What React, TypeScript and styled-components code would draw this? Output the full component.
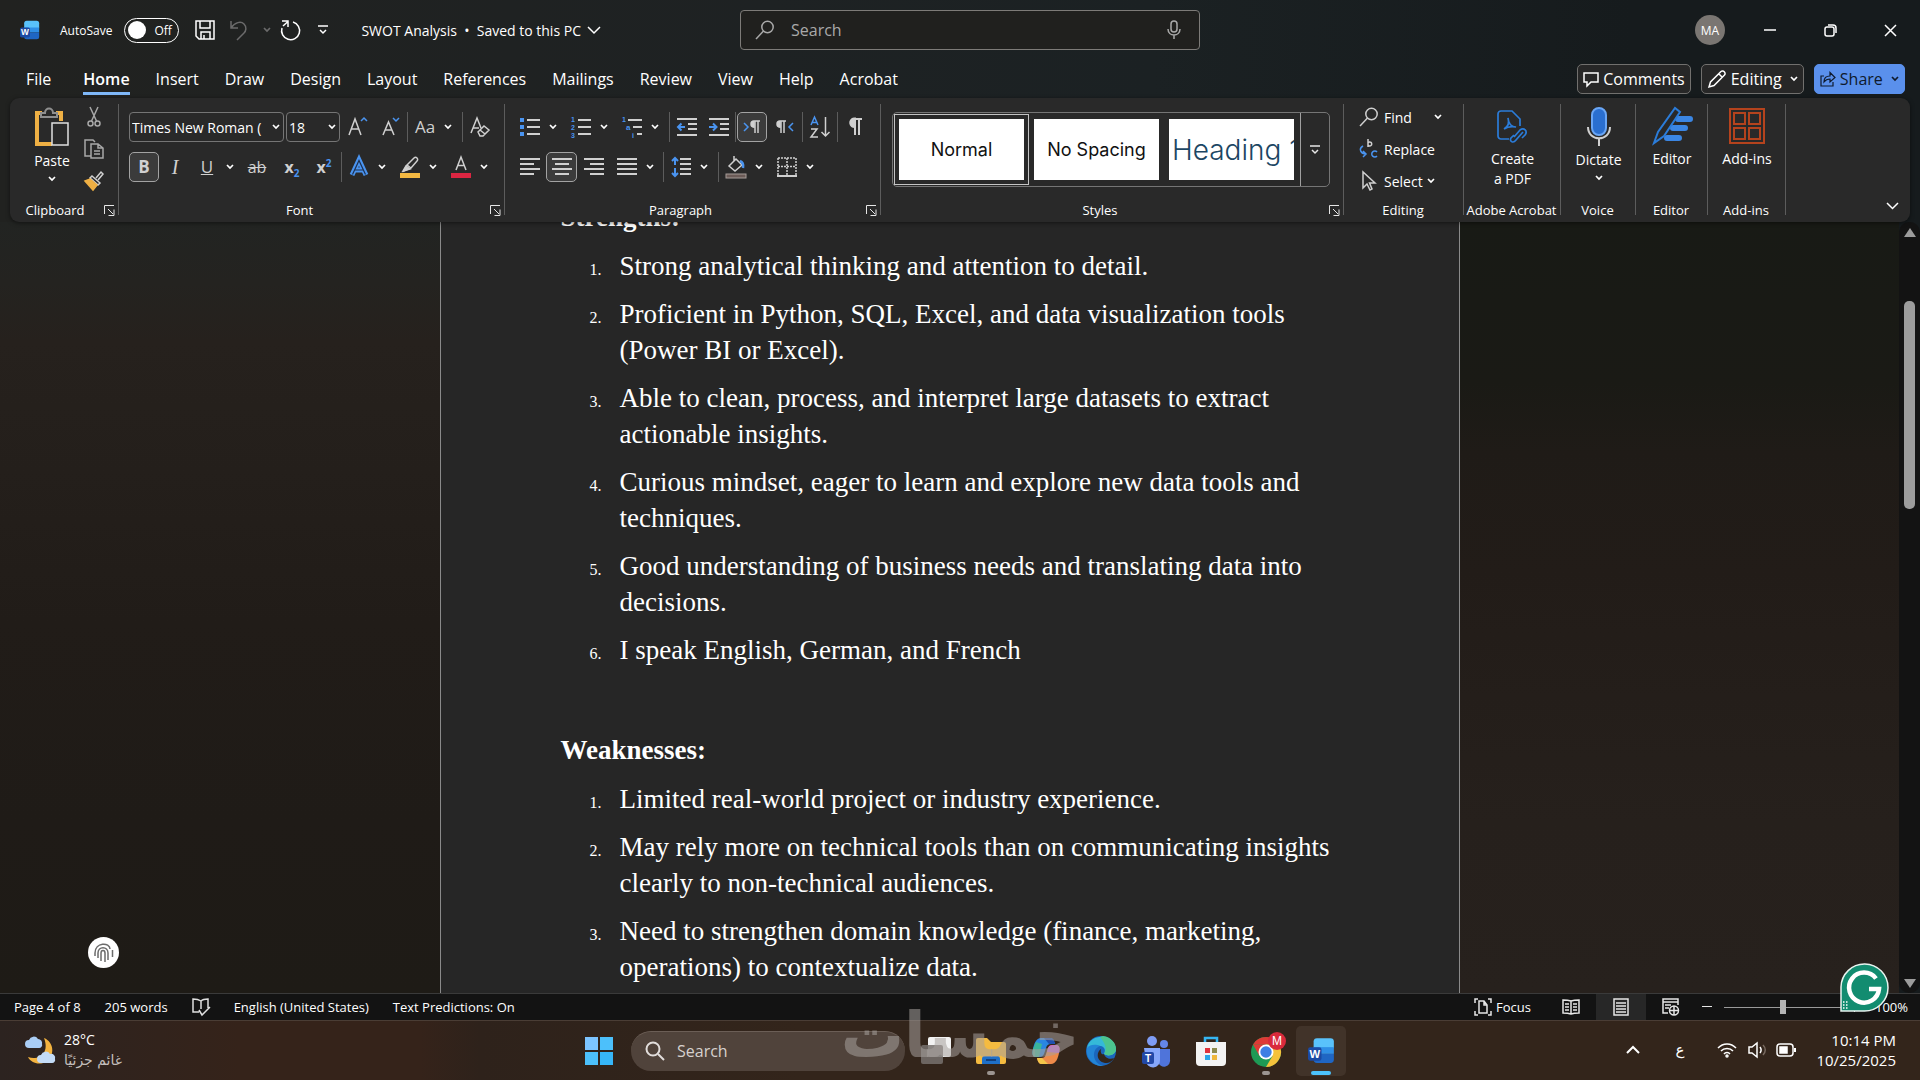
import React from "react";
import styled, { createGlobalStyle } from "styled-components";

const ui = `"Open Sans", "Noto Sans", "DejaVu Sans", sans-serif`;
const blue = "#4a94f0";
const ink = "#d0d0d0";

const Global = createGlobalStyle`
  *, *::before, *::after { box-sizing: border-box; }
  html, body { margin: 0; padding: 0; }
  body { background: #1c1b17; color: #fff; font-family: ${ui}; overflow: hidden; }
  button, input, select { font: inherit; color: inherit; }
  button { background: none; border: 0; padding: 0; margin: 0; }
  h2, p, ol { margin: 0; padding: 0; font: inherit; }
  svg { display: block; flex: none; overflow: visible; }
`;

const Shell = styled.div`
  position: relative;
  height: 100vh;
  display: flex;
  flex-direction: column;
  background: linear-gradient(90deg, #212220 0, #1e2223 40%, #1b2123 60%, #161b1d 85%, #161b1d);
`;

/* ---------- title bar ---------- */
const TitleBar = styled.header`
  display: grid;
  grid-template-columns: minmax(0, 1fr) 460px minmax(0, 1fr);
  align-items: center;
  height: 60px;
  padding-left: 20px;
`;
const TitleLeft = styled.div`
  display: flex;
  align-items: center;
  white-space: nowrap;
`;
const AutoSave = styled.label`
  display: flex;
  align-items: center;
  gap: 12px;
  margin: 0 16px 0 20px;
  font-size: 12px;
`;
const Toggle = styled.span`
  display: flex;
  align-items: center;
  gap: 8px;
  width: 55px;
  height: 25px;
  padding-left: 3px;
  border: 1px solid #fff;
  border-radius: 13px;
  &::before { content: ""; width: 18px; height: 18px; border-radius: 50%; background: #fff; }
`;
const HiddenCheck = styled.input`
  position: absolute;
  opacity: 0;
  width: 1px;
  height: 1px;
`;
const QuickButton = styled.button<{ $w: number }>`
  display: flex;
  align-items: center;
  justify-content: center;
  width: ${(p) => p.$w}px;
  height: 30px;
`;
const DocTitle = styled.button`
  display: flex;
  align-items: center;
  gap: 6px;
  margin-left: 24px;
  font-size: 14px;
`;
const SearchBox = styled.label`
  display: flex;
  align-items: center;
  gap: 16px;
  height: 40px;
  padding: 0 18px 0 14px;
  border: 1px solid #7d7b78;
  border-radius: 4px;
  background: #20201e;
`;
const SearchInput = styled.input`
  flex: 1;
  min-width: 0;
  border: 0;
  outline: 0;
  padding: 0;
  background: none;
  font-size: 16px;
  &::placeholder { color: #a9a9a9; opacity: 1; }
`;
const WindowButtons = styled.div`
  display: flex;
  justify-content: flex-end;
  align-items: center;
`;
const Avatar = styled.button`
  width: 30px;
  height: 30px;
  margin-right: 15px;
  border-radius: 50%;
  background: #7a7672;
  font-size: 12px;
`;

/* ---------- tabs ---------- */
const TabRow = styled.nav`
  display: flex;
  align-items: center;
  justify-content: space-between;
  height: 38px;
  padding: 0 15px 0 26px;
`;
const Tabs = styled.div`
  display: flex;
  gap: 26px;
`;
const Tab = styled.button<{ $active?: boolean; $first?: boolean }>`
  height: 32px;
  margin-right: ${(p) => (p.$first ? 6 : 0)}px;
  padding-top: 3px;
  border-bottom: 3px solid ${(p) => (p.$active ? "#7fb8f8" : "transparent")};
  font-size: 16px;
  line-height: 26px;
  font-weight: ${(p) => (p.$active ? 600 : 400)};
`;
const Actions = styled.div`
  display: flex;
  gap: 10px;
`;
const ActionButton = styled.button<{ $primary?: boolean }>`
  display: flex;
  align-items: center;
  gap: 4px;
  height: 30px;
  padding: 0 5px;
  border: 1px solid ${(p) => (p.$primary ? "#5a90ec" : "#71706e")};
  border-radius: 5px;
  background: ${(p) => (p.$primary ? "#5a90ec" : "#272727")};
  color: ${(p) => (p.$primary ? "#0f1a2c" : "#fff")};
  font-size: 16px;
`;

/* ---------- ribbon ---------- */
const Ribbon = styled.section`
  position: relative;
  z-index: 1;
  display: flex;
  height: 124px;
  margin: 0 10px;
  border-radius: 9px;
  background: #292929;
  box-shadow: 0 1px 4px rgba(0, 0, 0, 0.5);
`;
const GroupBox = styled.div<{ $w: number; $pad: number; $top: number }>`
  position: relative;
  display: flex;
  flex-direction: column;
  justify-content: space-between;
  flex: none;
  width: ${(p) => p.$w}px;
  padding: ${(p) => p.$top}px 0 2px ${(p) => p.$pad}px;
  &::after {
    content: "";
    position: absolute;
    right: 0;
    top: 6px;
    bottom: 7px;
    width: 1px;
    background: #5c5c5c;
  }
`;
const GroupFoot = styled.div<{ $pad: number; $end: number }>`
  display: flex;
  align-items: center;
  gap: ${(p) => p.$end}px;
  height: 20px;
  margin-left: -${(p) => p.$pad}px;
  padding-right: ${(p) => (p.$end ? 4 : 2)}px;
  font-size: 13px;
  line-height: 20px;
  white-space: nowrap;
`;
const FootLabel = styled.span`
  flex: 1;
  text-align: center;
`;
const Rows = styled.div`
  display: flex;
  flex-direction: column;
  gap: 10px;
`;
const Row = styled.div<{ $gap?: number }>`
  display: flex;
  align-items: center;
  gap: ${(p) => p.$gap ?? 0}px;
`;
const Tool = styled.button<{ $w?: number; $on?: boolean }>`
  display: flex;
  align-items: center;
  justify-content: center;
  flex: none;
  width: ${(p) => p.$w ?? 32}px;
  height: 30px;
  border: 1px solid ${(p) => (p.$on ? "#a3a3a3" : "transparent")};
  border-radius: 5px;
  background: ${(p) => (p.$on ? "#3b3b3b" : "none")};
`;
const Split = styled.button`
  display: grid;
  grid-template-columns: 32px 14px;
  align-items: center;
  justify-items: center;
  height: 30px;
`;
const Sep = styled.i<{ $l?: number; $r?: number }>`
  flex: none;
  width: 1px;
  height: 30px;
  margin: 0 ${(p) => p.$r ?? 1}px 0 ${(p) => p.$l ?? 0}px;
  background: #5c5c5c;
`;
const Combo = styled.label<{ $w: number }>`
  display: flex;
  align-items: center;
  width: ${(p) => p.$w}px;
  height: 30px;
  margin-right: 2px;
  padding-right: 3px;
  border: 1px solid #757575;
  border-radius: 4px;
`;
const Select = styled.select`
  appearance: none;
  flex: 1;
  min-width: 0;
  padding: 0 0 0 2px;
  border: 0;
  outline: 0;
  background: none;
  font-size: 14px;
`;
const ClipGrid = styled.div`
  display: flex;
`;
const ClipColumn = styled.div`
  display: flex;
  flex-direction: column;
  align-items: center;
  gap: 12px;
  width: 24px;
`;
const BigButton = styled.button<{ $w: number; $gap?: number }>`
  display: flex;
  flex-direction: column;
  align-items: center;
  width: ${(p) => p.$w}px;
  font-size: 14px;
  line-height: 20px;
  & > svg:first-child { margin-bottom: ${(p) => p.$gap ?? 4}px; }
  & > svg + svg { margin-top: 5px; }
`;
const Gallery = styled.div`
  display: flex;
  width: 438px;
  height: 75px;
  border: 1px solid #757575;
  border-radius: 5px;
`;
const StyleCards = styled.div`
  display: flex;
  gap: 10px;
  flex: 1;
  padding: 6px;
`;
const StyleCard = styled.button<{ $on?: boolean; $size: number; $color: string }>`
  width: 125px;
  height: 61px;
  padding: 0 3px;
  overflow: hidden;
  white-space: nowrap;
  background: #fff;
  color: ${(p) => p.$color};
  font-family: Inter, "Liberation Sans", sans-serif;
  font-size: ${(p) => p.$size}px;
  font-weight: ${(p) => (p.$size > 20 ? 300 : 400)};
  text-align: ${(p) => (p.$size > 20 ? "left" : "center")};
  box-shadow: ${(p) => (p.$on ? "0 0 0 4px #292929, 0 0 0 5px #c4c4c4" : "none")};
`;
const GalleryMore = styled.button`
  display: flex;
  align-items: center;
  justify-content: center;
  width: 29px;
  border: 1px solid #a0a0a0;
  border-width: 0 0 0 1px;
`;
const EditList = styled.div`
  display: flex;
  flex-direction: column;
`;
const EditItem = styled.button<{ $gap?: number }>`
  display: flex;
  align-items: center;
  height: 32px;
  font-size: 14px;
  & > svg:first-child { margin-right: 5px; }
  & > svg:last-child { margin-left: ${(p) => p.$gap ?? 0}px; }
  & > svg:only-child { margin-left: 0; }
`;
const RibbonEnd = styled.div`
  flex: 1;
  display: flex;
  justify-content: flex-end;
  align-items: flex-end;
  padding: 0 11px 12px 0;
`;

/* ---------- document ---------- */
const Workspace = styled.main`
  position: relative;
  flex: 1;
  min-height: 0;
  display: flex;
  overflow: hidden;
`;
const Canvas = styled.div`
  flex: 1;
  display: flex;
  justify-content: center;
  overflow: hidden;
  background:
    linear-gradient(180deg, #222422 0, #242320 60px, #26211d 120px, #241f1b 250px, #211c18 400px, #1f1b17 600px, #1e1b16) left / 50% 100% no-repeat,
    linear-gradient(180deg, #181a15 0, #1a1a15 160px, #1f1b17 230px, #221c18 350px, #26201c 600px, #27211d) right / 50% 100% no-repeat;
`;
const Page = styled.article`
  width: 1020px;
  max-width: 100%;
  padding: 0 120px;
  border: solid #8a8a8a;
  border-width: 0 1px;
  background: #262626;
  font-family: "Liberation Serif", "Times New Roman", serif;
  font-size: 27px;
  line-height: 36px;
`;
const Scrolled = styled.div`
  margin-top: -23px;
`;
const Heading = styled.h2`
  margin-bottom: 13px;
  font-weight: 700;
`;
const Blank = styled.p`
  height: 36px;
  margin: 14px 0;
`;
const List = styled.ol`
  display: flex;
  flex-direction: column;
  gap: 12px;
  list-style: none;
`;
const Item = styled.li`
  display: flex;
  align-items: baseline;
  padding-left: 29px;
`;
const Num = styled.span`
  flex: none;
  width: 30px;
  font-size: 16px;
  line-height: 20px;
`;
const ScrollBar = styled.div`
  display: flex;
  flex-direction: column;
  align-items: center;
  width: 21px;
  padding: 6px 0 5px;
  border-radius: 10px;
  background: #131313;
`;
const Thumb = styled.div`
  width: 11px;
  height: 208px;
  margin: 64px 0 auto;
  border-radius: 5px;
  background: #9c9c9c;
`;
const Finger = styled.button`
  position: absolute;
  left: 88px;
  bottom: 25px;
  display: flex;
  align-items: center;
  justify-content: center;
  width: 31px;
  height: 31px;
  border-radius: 50%;
  background: #fff;
`;
const Grammarly = styled.button`
  position: absolute;
  right: 31px;
  bottom: 68px;
`;

/* ---------- status bar ---------- */
const StatusBar = styled.footer`
  display: flex;
  justify-content: space-between;
  align-items: center;
  height: 28px;
  padding: 0 12px 0 14px;
  border-top: 1px solid #3a3a3a;
  border-bottom: 1px solid #4a3d35;
  background: #131313;
  font-size: 13px;
  line-height: 20px;
`;
const StatusSet = styled.div<{ $gap: number }>`
  display: flex;
  align-items: center;
  gap: ${(p) => p.$gap}px;
  height: 100%;
`;
const StatusButton = styled.button<{ $on?: boolean; $w?: number; $end?: boolean; $after?: number }>`
  display: flex;
  align-items: center;
  justify-content: ${(p) => (p.$end ? "flex-end" : "center")};
  gap: 4px;
  height: 100%;
  width: ${(p) => (p.$w ? `${p.$w}px` : "auto")};
  margin-right: ${(p) => p.$after ?? 0}px;
  background: ${(p) => (p.$on ? "#272727" : "none")};
`;
const Zoom = styled.input`
  appearance: none;
  width: 118px;
  height: 14px;
  margin: 0 6px;
  background: linear-gradient(#9a9a9a, #9a9a9a) center / 100% 1px no-repeat;
  &::-webkit-slider-thumb {
    appearance: none;
    width: 6px;
    height: 14px;
    background: #b4b4b4;
  }
`;

/* ---------- taskbar ---------- */
const TaskBar = styled.footer`
  position: relative;
  display: grid;
  grid-template-columns: minmax(0, 1fr) auto minmax(0, 1fr);
  height: 59px;
  background: linear-gradient(90deg, #2c2320 0, #35231a 240px, #35231a 420px, #2e221b 480px, #33251b 800px, #33251b);
`;
const Weather = styled.button`
  display: flex;
  align-items: center;
  gap: 8px;
  padding: 0 0 2px 24px;
  text-align: left;
  font-size: 14px;
  line-height: 20px;
`;
const WeatherNote = styled.div`
  color: #c4bfbc;
  font-family: "DejaVu Sans", sans-serif;
  font-size: 14px;
`;
const Dock = styled.div`
  display: flex;
  align-items: center;
  gap: 5px;
`;
const DockButton = styled.button<{ $on?: boolean; $mark?: string }>`
  position: relative;
  display: flex;
  align-items: center;
  justify-content: center;
  width: 50px;
  height: 50px;
  border-radius: 5px;
  background: ${(p) => (p.$on ? "#413329" : "none")};
  &::after {
    content: "";
    position: absolute;
    bottom: 1px;
    width: ${(p) => (p.$on ? 20 : 8)}px;
    height: 4px;
    border-radius: 2px;
    background: ${(p) => p.$mark ?? "transparent"};
  }
`;
const DockSearch = styled.label`
  display: flex;
  align-items: center;
  gap: 12px;
  width: 274px;
  height: 40px;
  margin: 0 1px 0 2px;
  padding: 0 14px;
  border-radius: 20px;
  border-top: 1px solid #6b5e56;
  background: #50433b;
`;
const DockInput = styled(SearchInput)`
  &::placeholder { color: #d6d1ce; }
`;
const Tray = styled.div`
  display: flex;
  align-items: center;
  justify-content: flex-end;
  padding: 0 24px 2px 0;
`;
const TrayButton = styled.button<{ $w: number }>`
  display: flex;
  align-items: center;
  justify-content: center;
  width: ${(p) => p.$w}px;
  height: 40px;
  font-family: "DejaVu Sans", sans-serif;
  font-size: 15px;
`;
const Clock = styled.button`
  width: 88px;
  margin-left: 4px;
  text-align: right;
  font-size: 15px;
  line-height: 20px;
`;
const Watermark = styled.div`
  position: absolute;
  left: 50%;
  bottom: 4px;
  transform: translateX(-50%);
  color: rgba(165, 160, 156, 0.55);
  font-family: "DejaVu Sans", sans-serif;
  font-weight: 700;
  font-size: 63px;
  line-height: 80px;
  white-space: nowrap;
  pointer-events: none;
`;

/* ---------- drawings ---------- */
type IconProps = { w: number; h: number; children: React.ReactNode; c?: string; s?: number };
const Icon = ({ w, h, children, c = ink, s = 2 }: IconProps) => (
  <svg width={w} height={h} viewBox={`0 0 ${w} ${h}`} fill="none" stroke={c} strokeWidth={s} aria-hidden="true">
    {children}
  </svg>
);
const Chevron = ({ c = "#fff", big = false }: { c?: string; big?: boolean }) =>
  big ? (
    <Icon w={14} h={8} c={c} s={1.500}><path d="M1 1l6 6 6-6" /></Icon>
  ) : (
    <Icon w={8} h={6} c={c} s={1.700}><path d="M1 1l3 3 3-3" /></Icon>
  );
const Launcher = () => (
  <Icon w={11} h={11} c="#e6e6e6" s={1}><path d="M.5 9V.5H10M4 4l5 5M10 4.500V10.500H4.500" /></Icon>
);
const Mag = ({ c = ink }: { c?: string }) => (
  <Icon w={20} h={20} c={c} s={1.500}><circle cx="12.500" cy="7" r="5.700" /><path d="M8.500 11L1 19" /></Icon>
);
const Lines = ({ rows }: { rows: [number, number][] }) => (
  <Icon w={20} h={20} s={2}>
    {rows.map(([a, b], i) => <path key={i} d={`M${a} ${2 + i * 5}H${b}`} />)}
  </Icon>
);
const Glyph = styled.span<{ $size: number; $c?: string; $bold?: boolean; $serif?: boolean; $italic?: boolean; $line?: string }>`
  color: ${(p) => p.$c ?? ink};
  font-family: ${(p) => (p.$serif ? `"Liberation Serif", serif` : ui)};
  font-size: ${(p) => p.$size}px;
  line-height: 24px;
  font-weight: ${(p) => (p.$bold ? 700 : 400)};
  font-style: ${(p) => (p.$italic ? "italic" : "normal")};
  text-decoration: ${(p) => p.$line ?? "none"};
  & > sub, & > sup { color: ${blue}; font-size: 10px; line-height: 1px; font-weight: 700; }
`;
const SvgText = styled.text<{ $size: number; $bold?: boolean }>`
  font-family: "Liberation Sans", Arial, sans-serif;
  font-size: ${(p) => p.$size}px;
  font-weight: ${(p) => (p.$bold ? 700 : 400)};
  stroke: none;
`;
const Wordmark = ({ size }: { size: number }) => (
  <svg width={size} height={size} viewBox="0 0 24 24" aria-hidden="true">
    <path d="M5 4a3 3 0 013-3h12a3 3 0 013 3v6H5z" fill="#59c2fb" />
    <path d="M5 9h18v6H5z" fill="#2f8fe6" />
    <path d="M5 15h18v5a3 3 0 01-3 3H8a3 3 0 01-3-3z" fill="#1f66c4" />
    <rect x="0" y="9" width="12" height="12" rx="2" fill="#1b4aa3" />
    <SvgText $size={10} $bold x="6" y="18.500" fill="#fff" textAnchor="middle">W</SvgText>
  </svg>
);
const Indent = ({ right = false }: { right?: boolean }) => (
  <Icon w={20} h={20}>
    <path d="M0 2H20M11 7H20M11 12H20M0 18H20" />
    <path stroke={blue} d={right ? "M0 10H7M4 6.500l3.500 3.500L4 13.500" : "M1 10H8M4.500 6.500L1 10l3.500 3.500"} />
  </Icon>
);

type GroupProps = { w: number; label: string; pad?: number; top?: number; launcher?: number; children: React.ReactNode };
const Group = ({ w, label, pad = 10, top = 14, launcher = 0, children }: GroupProps) => (
  <GroupBox $w={w} $pad={pad} $top={top}>
    {children}
    <GroupFoot $pad={pad} $end={launcher}>
      <FootLabel>{label}</FootLabel>
      {launcher > 0 && <button aria-label={`${label} settings`}><Launcher /></button>}
    </GroupFoot>
  </GroupBox>
);

const tabs = ["File", "Home", "Insert", "Draw", "Design", "Layout", "References", "Mailings", "Review", "View", "Help", "Acrobat"];
const strengths = [
  "Strong analytical thinking and attention to detail.",
  "Proficient in Python, SQL, Excel, and data visualization tools (Power BI or Excel).",
  "Able to clean, process, and interpret large datasets to extract actionable insights.",
  "Curious mindset, eager to learn and explore new data tools and techniques.",
  "Good understanding of business needs and translating data into decisions.",
  "I speak English, German, and French",
];
const weaknesses = [
  "Limited real-world project or industry experience.",
  "May rely more on technical tools than on communicating insights clearly to non-technical audiences.",
  "Need to strengthen domain knowledge (finance, marketing, operations) to contextualize data.",
];
const Numbered = ({ items }: { items: string[] }) => (
  <List>
    {items.map((t, i) => (
      <Item key={t}><Num>{i + 1}.</Num><span>{t}</span></Item>
    ))}
  </List>
);

const Title = () => (
  <TitleBar>
    <TitleLeft>
      <Wordmark size={20} />
      <AutoSave>
        AutoSave
        <HiddenCheck type="checkbox" role="switch" />
        <Toggle>Off</Toggle>
      </AutoSave>
      <QuickButton $w={20} aria-label="Save">
        <Icon w={20} h={20} c="#fff" s={1.500}><path d="M1 1H19V19H4L1 16ZM5 1V8H15V1M6 19V12H15V19M9 15V19" /></Icon>
      </QuickButton>
      <QuickButton $w={48} aria-label="Undo">
        <Icon w={20} h={20} c="#6b6b6b" s={1.500}><path d="M2 1V8H9M2 8C6 2 12 1 15 4C18 7 17 11 15 13L8 20" /></Icon>
      </QuickButton>
      <Chevron c="#6b6b6b" />
      <QuickButton $w={38} aria-label="Repeat">
        <Icon w={20} h={20} c="#fff" s={1.500}><path d="M2 1H8V7M8 1.500L3 6M13 2A9 9 0 112 8" /></Icon>
      </QuickButton>
      <QuickButton $w={28} aria-label="Customize">
        <Icon w={10} h={10} c="#fff" s={1.500}><path d="M0 1H10M2 5l3 3 3-3" /></Icon>
      </QuickButton>
      <DocTitle>SWOT Analysis&nbsp; •&nbsp; Saved to this PC <Chevron big /></DocTitle>
    </TitleLeft>
    <SearchBox>
      <Mag c="#a9a9a9" />
      <SearchInput aria-label="Search" placeholder="Search" />
      <Icon w={14} h={20} c="#a9a9a9" s={1.500}><rect x="4" y="1" width="6" height="11" rx="3" /><path d="M1 9C1 17 13 17 13 9M7 15V19" /></Icon>
    </SearchBox>
    <WindowButtons>
      <Avatar>MA</Avatar>
      <QuickButton $w={60} aria-label="Minimize"><Icon w={12} h={12} c="#fff" s={1.500}><path d="M0 6H12" /></Icon></QuickButton>
      <QuickButton $w={60} aria-label="Restore"><Icon w={13} h={13} c="#fff" s={1.500}><rect x="1" y="3" width="9" height="9" rx="2" /><path d="M4 1H9a3 3 0 013 3V9" /></Icon></QuickButton>
      <QuickButton $w={60} aria-label="Close"><Icon w={13} h={13} c="#fff" s={1.500}><path d="M1 1l11 11M12 1L1 12" /></Icon></QuickButton>
    </WindowButtons>
  </TitleBar>
);

const TabStrip = () => (
  <TabRow>
    <Tabs>
      {tabs.map((t, i) => <Tab key={t} $first={i === 0} $active={t === "Home"}>{t}</Tab>)}
    </Tabs>
    <Actions>
      <ActionButton>
        <Icon w={16} h={16} c="#fff" s={1.500}><path d="M1 2H15V11H8L4 15V11H1Z" /></Icon>Comments
      </ActionButton>
      <ActionButton>
        <Icon w={20} h={20} c="#fff" s={1.500}><path d="M2 18L3.500 13L14 2.500C16 .5 19.500 4 17.500 6L7 16.500ZM12 5l3.500 3.500" /></Icon>Editing&nbsp;<Chevron />
      </ActionButton>
      <ActionButton $primary>
        <Icon w={16} h={16} c="#0f1a2c" s={1.200}><path d="M4 5H1V15H13V11M4 11C4 7 6 5 10 5V1.500L15 6.500L10 11V8C7 8 5.500 9 4 11Z" /></Icon>Share&nbsp;<Chevron c="#0f1a2c" />
      </ActionButton>
    </Actions>
  </TabRow>
);

const FontGroup = () => (
  <Group w={386} label="Font" launcher={10}>
    <Rows>
      <Row>
        <Combo $w={155}><Select aria-label="Font"><option>Times New Roman (</option></Select><Chevron /></Combo>
        <Combo $w={54}><Select aria-label="Font size"><option>18</option></Select><Chevron /></Combo>
        <Tool aria-label="Grow font"><Icon w={20} h={20} s={1.500}><path d="M1 18L7 2L13 18M3 12H11" /><path stroke={blue} d="M13 4l3-3 3 3" /></Icon></Tool>
        <Tool $w={33} aria-label="Shrink font"><Icon w={18} h={20} s={1.500}><path d="M1 18L6.500 5L12 18M3 13H10" /><path stroke={blue} d="M11 1l3 3 3-3" /></Icon></Tool>
        <Sep />
        <Split aria-label="Change case"><Glyph $size={17}>Aa</Glyph><Chevron /></Split>
        <Sep $l={7} />
        <Tool aria-label="Clear formatting"><Icon w={20} h={20} s={1.500}><path d="M1 16L7 1L11 11M3 11H9" /><path d="M8 15L14 9L19 13L13 19L10 19Z M10 13l5 4" /></Icon></Tool>
      </Row>
      <Row>
        <Tool $w={30} $on aria-label="Bold"><Glyph $size={17} $bold>B</Glyph></Tool>
        <Tool aria-label="Italic"><Glyph $size={20} $serif $italic>I</Glyph></Tool>
        <Split aria-label="Underline"><Glyph $size={17} $line="underline">U</Glyph><Chevron /></Split>
        <Tool $w={40} aria-label="Strikethrough"><Glyph $size={16} $line="line-through">ab</Glyph></Tool>
        <Tool $w={30} aria-label="Subscript"><Glyph $size={16} $bold>x<sub>2</sub></Glyph></Tool>
        <Tool $w={34} aria-label="Superscript"><Glyph $size={16} $bold>x<sup>2</sup></Glyph></Tool>
        <Sep />
        <Row $gap={5}>
          <Split aria-label="Text effects">
            <Icon w={20} h={20} c="#4a94f0" s={5}><path d="M3 18L10 3L17 18M6 13H14" /><path stroke="#1d3050" strokeWidth={1.200} d="M3.500 17.500L10 3.500L16.500 17.500M6 13H14" /></Icon><Chevron />
          </Split>
          <Split aria-label="Highlight">
            <Icon w={20} h={22} s={1.500}><path d="M7 9L14 2C16 0 19 3 17 5L11 12ZM7 9L4 15L11 12" /><path d="M6 10L3 15L10 13Z" fill={ink} /><path d="M0 19.500H20" stroke="#f4b942" strokeWidth={5} /></Icon><Chevron />
          </Split>
          <Split aria-label="Font color">
            <Icon w={20} h={22} s={1.500}><path d="M5 14L10 1L15 14M7 9.500H13" /><path d="M0 19.500H20" stroke="#dc2642" strokeWidth={5} /></Icon><Chevron />
          </Split>
        </Row>
      </Row>
    </Rows>
  </Group>
);

const ParagraphGroup = () => (
  <Group w={376} label="Paragraph" pad={9} launcher={10}>
    <Rows>
      <Row>
        <Row $gap={5}>
          <Split aria-label="Bullets"><Icon w={20} h={20}><path d="M7 3H20M7 10H20M7 17H20" /><path stroke={blue} strokeWidth={4} d="M0 3H4M0 10H4M0 17H4" /></Icon><Chevron /></Split>
          <Split aria-label="Numbering"><Icon w={20} h={20}><path d="M7 3H20M7 10H20M7 17H20" /><g fill={blue}><SvgText $size={7} $bold x="0" y="5">1</SvgText><SvgText $size={7} $bold x="0" y="13">2</SvgText><SvgText $size={7} $bold x="0" y="21">3</SvgText></g></Icon><Chevron /></Split>
          <Split aria-label="Multilevel list"><Icon w={20} h={20}><path d="M6 3H20M11 10H20M15 17H20" /><g fill={blue}><SvgText $size={7} $bold x="0" y="5">1</SvgText><SvgText $size={8} $bold x="4" y="13">a</SvgText><SvgText $size={7} $bold x="10" y="21">i</SvgText></g></Icon><Chevron /></Split>
        </Row>
        <Sep $l={7} />
        <Tool aria-label="Decrease indent"><Indent /></Tool>
        <Tool aria-label="Increase indent"><Indent right /></Tool>
        <Sep />
        <Tool $w={30} $on aria-label="Left to right"><Icon w={16} h={16} s={1.500}><path stroke={blue} d="M0 4l4 4-4 4" /><path d="M10 8A3 3 0 0110 2H16M11 2V14M14 2V14" /><path d="M10 2.500V8A2.800 2.800 0 0110 2.500" fill={ink} /></Icon></Tool>
        <Tool $w={35} aria-label="Right to left"><Icon w={16} h={16} s={1.500}><path stroke={blue} d="M16 4l-4 4 4 4" /><path d="M3 8A3 3 0 013 2H9M4 2V14M7 2V14" /><path d="M3 2.500V8A2.800 2.800 0 013 2.500" fill={ink} /></Icon></Tool>
        <Sep />
        <Tool aria-label="Sort"><Icon w={20} h={22} s={1.500}><path stroke={blue} d="M1 9L4.500 1L8 9M2 6.500H7" /><path d="M1 13H7L1 21H8M15.500 1V20M11.500 16l4 4 4-4" /></Icon></Tool>
        <Sep $l={1} />
        <Tool aria-label="Show marks"><Icon w={16} h={20} s={2}><path d="M8 1V18M12 1V18M6 2H15" /><path d="M8 1.500V10A4 4 0 017 1.500Z" fill={ink} /></Icon></Tool>
      </Row>
      <Row>
        <Tool aria-label="Align left"><Lines rows={[[0, 20], [0, 14], [0, 20], [0, 14]]} /></Tool>
        <Tool $w={31} $on aria-label="Center"><Lines rows={[[0, 20], [3, 17], [0, 20], [3, 17]]} /></Tool>
        <Tool $w={34} aria-label="Align right"><Lines rows={[[0, 20], [6, 20], [0, 20], [6, 20]]} /></Tool>
        <Split aria-label="Justify"><Lines rows={[[0, 20], [0, 20], [0, 20], [0, 20]]} /><Chevron /></Split>
        <Sep $l={6} />
        <Split aria-label="Line spacing"><Icon w={20} h={20}><path d="M9 2H20M9 7H20M9 12H20M9 17H20" /><path stroke={blue} d="M4 1V8M1 4l3-3 3 3M4 11V19M1 16l3 3 3-3" /></Icon><Chevron /></Split>
        <Sep $l={7} />
        <Row $gap={5}>
          <Split aria-label="Shading"><Icon w={20} h={22} s={1.500}><path d="M8 0V5M3 10L10 3L16 9L9 15Z" /><path d="M14 5C17 6 17.500 9 17 12" stroke={blue} strokeWidth={2.500} /><rect x="0" y="18" width="20" height="4" fill="#6b5b57" stroke="#a59c98" strokeWidth={1} /></Icon><Chevron /></Split>
          <Split aria-label="Borders"><Icon w={20} h={20} s={1.500}><path strokeDasharray="2 1" d="M1 1H19V18M1 1V18M10 1V18M1 9.500H19" /><path d="M0 19H20" strokeWidth={2} /></Icon><Chevron /></Split>
        </Row>
      </Row>
    </Rows>
  </Group>
);

const RibbonBar = () => (
  <Ribbon>
    <Group w={109} label="Clipboard" pad={12} top={9} launcher={4}>
      <ClipGrid>
        <BigButton $w={60} $gap={4}>
          <Icon w={36} h={40}>
            <path d="M8 6H3V37H18M22 6H27V14" stroke="#efb044" strokeWidth={4} />
            <path d="M7 10V6H11C11 0 19 0 19 6H23V10Z" stroke="#8f8f8f" fill="#292929" />
            <rect x="18" y="16" width="16" height="22" stroke="#e0e0e0" fill="#292929" strokeWidth={1.500} />
          </Icon>
          Paste
          <Chevron />
        </BigButton>
        <ClipColumn>
          <button aria-label="Cut"><Icon w={14} h={20} c="#a8a8a8" s={1.500}><path d="M3 0L9.500 14M11 0L4.500 14" /><circle cx="3.500" cy="16.500" r="2.500" /><circle cx="10.500" cy="16.500" r="2.500" /></Icon></button>
          <button aria-label="Copy"><Icon w={20} h={20} c="#a8a8a8" s={1.500}><path d="M7 17H1V1H9L11 3" /><path d="M7 5H14L19 9V19H7ZM14 5V9H19M10 12H16M10 15H16" /></Icon></button>
          <button aria-label="Format painter"><Icon w={20} h={20} s={1.500}><path d="M12 7L17 1L19 3L14 9" /><path d="M8 5L16 12L14 14L6 7Z" /><path d="M1 10L6 8L13 14L9 19Z" fill="#efb044" stroke="#efb044" /></Icon></button>
        </ClipColumn>
      </ClipGrid>
    </Group>
    <FontGroup />
    <ParagraphGroup />
    <Group w={463} label="Styles" pad={11} launcher={10}>
      <Gallery>
        <StyleCards>
          <StyleCard $on $size={18} $color="#111">Normal</StyleCard>
          <StyleCard $size={18} $color="#111">No Spacing</StyleCard>
          <StyleCard $size={28} $color="#1c4663">Heading 1</StyleCard>
        </StyleCards>
        <GalleryMore aria-label="More styles"><Icon w={10} h={10} c="#e6e6e6" s={1.500}><path d="M0 1H10M2 5l3 3 3-3" /></Icon></GalleryMore>
      </Gallery>
    </Group>
    <Group w={120} label="Editing" pad={15} top={3}>
      <EditList>
        <EditItem $gap={22}><Mag />Find<Chevron /></EditItem>
        <EditItem><Icon w={20} h={20} s={1.500}><path d="M9 0V8M9 6A2 2 0 109 3.900" /><path stroke={blue} d="M4 7C-1 10 2 15 7 15M4 12l3 3-3 3M18 13A3 3 0 1018 17" /></Icon><span>Replace</span></EditItem>
        <EditItem $gap={4}><Icon w={20} h={20} s={1.500}><path d="M4 1V17L8 13L11 19L13 18L10.500 12H16Z" /></Icon>Select<Chevron /></EditItem>
      </EditList>
    </Group>
    <Group w={97} label="Adobe Acrobat" pad={0} top={12}>
      <BigButton $w={97} $gap={3}>
        <Icon w={32} h={36} c="#2b7cd9"><path d="M12 29H4A3 3 0 011 26V4A3 3 0 014 1H15L23 9V16M7 19C12 16 12 11 11 8C11 14 15 17 19 17C14 16 10 17 7 19" strokeWidth={1.700} /><path strokeWidth={1.700} d="M17 27L23 20C27 17 31 21 28 25L25 28M26 22L19 30C16 34 12 31 14 28L17 25" /></Icon>
        <span>Create<br />a PDF</span>
      </BigButton>
    </Group>
    <Group w={75} label="Voice" pad={0} top={9}>
      <BigButton $w={75}>
        <Icon w={24} h={39}><rect x="5" y="1" width="14" height="27" rx="7" fill="#2a6fd0" stroke="#6aa6f5" /><path d="M1 20C1 35 23 35 23 20M12 32V39" /></Icon>
        Dictate<Chevron />
      </BigButton>
    </Group>
    <Group w={72} label="Editor" pad={0} top={8}>
      <BigButton $w={72}>
        <Icon w={38} h={39} c="#2b7cd9"><path d="M25 13H37M20 22H32M14 32H26" strokeWidth={6} stroke="#3b86e3" strokeLinecap="round" /><path fill="#292929" d="M1 37L5 26L22 2L27 6L11 30Z" /></Icon>
        Editor
      </BigButton>
    </Group>
    <Group w={78} label="Add-ins" pad={0} top={10}>
      <BigButton $w={78} $gap={5}>
        <Icon w={36} h={36} c="#b5431d"><rect x="1" y="1" width="34" height="34" /><rect x="5" y="5" width="11" height="11" /><rect x="20" y="5" width="11" height="11" /><rect x="5" y="20" width="11" height="11" /><rect x="20" y="20" width="11" height="11" /></Icon>
        Add-ins
      </BigButton>
    </Group>
    <RibbonEnd><button aria-label="Ribbon options"><Icon w={13} h={8} c="#fff" s={1.500}><path d="M1 1l5.500 5.500L12 1" /></Icon></button></RibbonEnd>
  </Ribbon>
);

const Status = () => (
  <StatusBar>
    <StatusSet $gap={24}>
      <span>Page 4 of 8</span>
      <span>205 words</span>
      <Icon w={18} h={18} c="#e0e0e0" s={1.500}><path d="M9 3C6 1 4 1 1 1V14H7M9 3C11 1 14 1 16 1V10M9 3V11M7 12l3 5 8-8" /></Icon>
      <span>English (United States)</span>
      <span>Text Predictions: On</span>
    </StatusSet>
    <StatusSet $gap={0}>
      <StatusButton $after={15}>
        <Icon w={18} h={18} c="#e6e6e6" s={1.500}><path d="M1 5V1H4M14 1H17V5M17 13V17H14M4 17H1V13" /><path d="M5 3H10L13 7V15H5ZM10 3V7H13" /></Icon>Focus
      </StatusButton>
      <StatusButton $w={50} aria-label="Read mode">
        <Icon w={18} h={16} c="#e6e6e6" s={1.500}><path d="M9 2C6 1 4 1 1 1V14C4 14 6 14 9 15C12 14 14 14 17 14V1C14 1 12 1 9 2V15M3 5H7M3 8H7M3 11H7M11 5H15M11 8H15M11 11H15" /></Icon>
      </StatusButton>
      <StatusButton $w={50} $on aria-label="Print layout">
        <Icon w={16} h={18} c="#e6e6e6" s={1.500}><rect x="1" y="1" width="14" height="16" /><path d="M3 5H13M3 8H13M3 11H13M3 14H13" /></Icon>
      </StatusButton>
      <StatusButton $w={50} aria-label="Web layout">
        <Icon w={18} h={18} c="#e6e6e6" s={1.500}><path d="M6 15H1V1H16V7M1 4H16M3 7H9M3 10H7" /><circle cx="12" cy="12.500" r="4.500" /><path d="M8 12.500H17M12 8V17" /></Icon>
      </StatusButton>
      <StatusButton $w={22} aria-label="Zoom out"><Icon w={10} h={10} c="#e6e6e6" s={1}><path d="M0 4.500H10" /></Icon></StatusButton>
      <Zoom type="range" aria-label="Zoom" defaultValue={50} />
      <StatusButton $w={14} aria-label="Zoom in"><Icon w={10} h={10} c="#e6e6e6" s={1}><path d="M0 4.500H10M4.500 0V10" /></Icon></StatusButton>
      <StatusButton $w={46} $end>100%</StatusButton>
    </StatusSet>
  </StatusBar>
);

const Apps = () => (
  <Dock>
    <DockButton aria-label="Start">
      <svg width="30" height="30" viewBox="0 0 30 30" aria-hidden="true"><path d="M1 1h13v13H1z" fill="#7cc4ff" /><path d="M16 1h13v13H16zM1 16h13v13H1z" fill="#4cc0fb" /><path d="M16 16h13v13H16z" fill="#36b6f8" /></svg>
    </DockButton>
    <DockSearch>
      <Icon w={20} h={20} c="#e2dedc" s={2}><circle cx="8" cy="8" r="6.500" /><path d="M13 13l6 6" /></Icon>
      <DockInput aria-label="Search Windows" placeholder="Search" />
    </DockSearch>
    <DockButton aria-label="Task view">
      <svg width="30" height="28" viewBox="0 0 30 28" aria-hidden="true"><rect x="7" y="0" width="23" height="20" rx="2" fill="#f2f2f2" /><rect x="0" y="8" width="22" height="19" rx="2" fill="#77716d" fillOpacity=".85" /></svg>
    </DockButton>
    <DockButton aria-label="File Explorer" $mark="#9c9591">
      <svg width="30" height="28" viewBox="0 0 30 28" aria-hidden="true"><path d="M0 3a2 2 0 012-2h9l4 4h13a2 2 0 012 2v18a2 2 0 01-2 2H2a2 2 0 01-2-2z" fill="#f5bb40" /><path d="M6 27v-5a3 3 0 013-3h12a3 3 0 013 3v5z" fill="#1f70c8" /><path d="M10 23h10" stroke="#123f7d" strokeWidth="2" /></svg>
    </DockButton>
    <DockButton aria-label="Copilot">
      <svg width="28" height="26" viewBox="0 0 28 26" aria-hidden="true">
        <path d="M9 0h9c3 0 4 2 5 6h-4c-3 0-4 1-5 4l-2 6c-1 2-2 3-5 3H4c-4 0-4-4-3-8C2 6 4 0 9 0z" fill="#2a86e2" />
        <path d="M1 11c1-2 2-5 3-7l6 2-3 13H4c-4 0-4-4-3-8z" fill="#3bb59a" />
        <path d="M12 0h6c3 0 4 2 5 6h-6z" fill="#1f4fae" />
        <path d="M19 26h-9c-3 0-4-2-5-6h4c3 0 4-1 5-4l2-6c1-2 2-3 5-3h3c4 0 4 4 3 8-1 5-3 11-8 11z" fill="#ee8a4a" />
        <path d="M27 15c1-4 1-8-3-8h-3c-3 0-4 1-5 3l-1 4z" fill="#c66bd0" />
        <path d="M16 26h-6c-3 0-4-2-5-6h5z" fill="#f4c64a" />
      </svg>
    </DockButton>
    <DockButton aria-label="Edge">
      <svg width="30" height="30" viewBox="0 0 30 30" aria-hidden="true"><circle cx="15" cy="15" r="15" fill="#1b66bd" /><path d="M1 12C4-3 28-3 30 13c0 6-8 8-12 5 3-6-2-9-7-8-5 0-9 2-10 2z" fill="#35b9d8" /><path d="M17 0c8 1 13 7 13 13 0 6-8 8-12 5 4-6 0-12-4-17z" fill="#4cc48f" /><path d="M18 18c-2 1-4-1-3-5-5 3-5 14 6 14 3 0 6-3 7-5-4 2-9 0-10-4z" fill="#33251b" /><path d="M14 10c-9 3-8 18 4 20C8 31-1 22 1 12c3-4 9-4 13-2z" fill="#2385d6" /></svg>
    </DockButton>
    <DockButton aria-label="Teams">
      <svg width="30" height="30" viewBox="0 0 30 30" aria-hidden="true"><circle cx="11" cy="5" r="5" fill="#7f9cf3" /><circle cx="23" cy="8" r="4" fill="#6486e8" /><path d="M17 13h12v10a6 6 0 01-12 3z" fill="#4f74da" /><path d="M3 12h16v12a7 7 0 01-14 1z" fill="#86a7fa" /><rect x="1" y="16" width="12" height="12" rx="2" fill="#2248a6" /><SvgText $size={10} $bold x="7" y="25.500" fill="#fff" textAnchor="middle">T</SvgText></svg>
    </DockButton>
    <DockButton aria-label="Store">
      <svg width="30" height="30" viewBox="0 0 30 30" aria-hidden="true"><path d="M9 7V2h12v5" fill="none" stroke="#35b6f3" strokeWidth="2.500" /><path d="M0 6h30v20a4 4 0 01-4 4H4a4 4 0 01-4-4z" fill="#f3f3f3" /><path d="M9 12h5v5H9z" fill="#e0333c" /><path d="M16 12h5v5h-5z" fill="#8c8a4c" /><path d="M9 19h5v5H9z" fill="#2aa6e8" /><path d="M16 19h5v5h-5z" fill="#efb73c" /></svg>
    </DockButton>
    <DockButton aria-label="Chrome" $mark="#9c9591">
      <svg width="36" height="38" viewBox="0 0 36 38" aria-hidden="true"><circle cx="18" cy="20" r="15" fill="#1e9a55" /><path d="M5 12.500A15 15 0 0131 12.500H18z" fill="#df3a35" /><path d="M18 12.500h13A15 15 0 0118 35l6.500-11z" fill="#f5c23c" /><path d="M5 12.500L11.500 24 18 12.500z" fill="#df3a35" /><circle cx="18" cy="20" r="7.500" fill="#fff" /><circle cx="18" cy="20" r="5.700" fill="#3f7fe4" /><circle cx="29" cy="9" r="9" fill="#d92a3c" /><SvgText $size={12} x="29" y="13" fill="#fff" textAnchor="middle">M</SvgText></svg>
    </DockButton>
    <DockButton aria-label="Word" $on $mark="#4cc2fb"><Wordmark size={27} /></DockButton>
  </Dock>
);

const Desktop = () => (
  <TaskBar>
    <Weather>
      <svg width="32" height="30" viewBox="0 0 32 30" aria-hidden="true"><path d="M20 3c10 4 11 17 3 23-7 5-16 2-19-4 11 4 22-4 16-19z" fill="#f3b33f" /><path d="M5 13a4 4 0 010-8 5 5 0 019-1 4 4 0 014 5 3 3 0 01-3 4z" fill="#a9cdf5" /><path d="M17 28a4 4 0 010-8 5 5 0 019-1 4 4 0 015 5 3 3 0 01-3 4z" fill="#c3dbf6" /></svg>
      <div>28°C<WeatherNote lang="ar" dir="rtl">غائم جزئيًا</WeatherNote></div>
    </Weather>
    <Apps />
    <Tray>
      <TrayButton $w={42} aria-label="Hidden icons"><Icon w={14} h={9} c="#fff"><path d="M1 8l6-6 6 6" /></Icon></TrayButton>
      <TrayButton $w={52} lang="ar">ع</TrayButton>
      <TrayButton $w={42} aria-label="Wi-Fi"><Icon w={20} h={16} c="#fff" s={1.500}><path d="M1 6C6 .5 14 .5 19 6M4 9C7 5.500 13 5.500 16 9M7 12C8.500 10 11.500 10 13 12" /><circle cx="10" cy="14" r="1" /></Icon></TrayButton>
      <TrayButton $w={20} aria-label="Volume"><Icon w={20} h={16} c="#fff" s={1.500}><path d="M1 5H4L9 1V15L4 11H1Z" /><path d="M12 5C13.500 7 13.500 9 12 11" /><path stroke="#77695f" d="M15 3C18 6 18 10 15 13" /></Icon></TrayButton>
      <TrayButton $w={36} aria-label="Battery"><Icon w={20} h={14} c="#fff" s={1.500}><rect x="1" y="1" width="16" height="12" rx="3" /><path d="M4 4H11V10H4Z" fill="#fff" /><path d="M19 5V9" strokeWidth={2} /></Icon></TrayButton>
      <Clock>10:14 PM<br />10/25/2025</Clock>
    </Tray>
    <Watermark lang="ar">خمسات</Watermark>
  </TaskBar>
);

export default function App() {
  return (
    <>
      <Global />
      <Shell>
        <Title />
        <TabStrip />
        <RibbonBar />
        <Workspace>
          <Canvas>
            <Page>
              <Scrolled>
                <Heading>Strengths:</Heading>
                <Numbered items={strengths} />
                <Blank />
                <Heading>Weaknesses:</Heading>
                <Numbered items={weaknesses} />
              </Scrolled>
            </Page>
          </Canvas>
          <ScrollBar>
            <Icon w={12} h={9} c="none"><path d="M6 0L12 9H0Z" fill="#9c9c9c" /></Icon>
            <Thumb />
            <Icon w={12} h={9} c="none"><path d="M0 0H12L6 9Z" fill="#9c9c9c" /></Icon>
          </ScrollBar>
          <Finger aria-label="Fingerprint">
            <Icon w={20} h={20} c="#6b6b6b" s={1.500}><path d="M1 13V10C1 -1 16 -1 16 6M4 15V10C4 3 14 3 14 10V17M7 18V10C7 6.500 11 6.500 11 10V19M18.500 7V14" /></Icon>
          </Finger>
        </Workspace>
        <Status />
        <Desktop />
        <Grammarly aria-label="Grammarly">
          <svg width="49" height="49" viewBox="0 0 49 49" fill="none" aria-hidden="true">
            <path d="M1 48V24A23.500 23.500 0 1124.500 48Z" fill="#128c70" stroke="#e8f4f0" strokeWidth="1.500" />
            <path d="M36 15.500A15 15 0 1039 26H29" stroke="#fff" strokeWidth="4.500" />
            <path d="M3 39h1.500M6 39h1.500M3 42h1.500M6 42h1.500M3 45h1.500M6 45h1.500" stroke="#fff" strokeWidth="1.500" />
          </svg>
        </Grammarly>
      </Shell>
    </>
  );
}
